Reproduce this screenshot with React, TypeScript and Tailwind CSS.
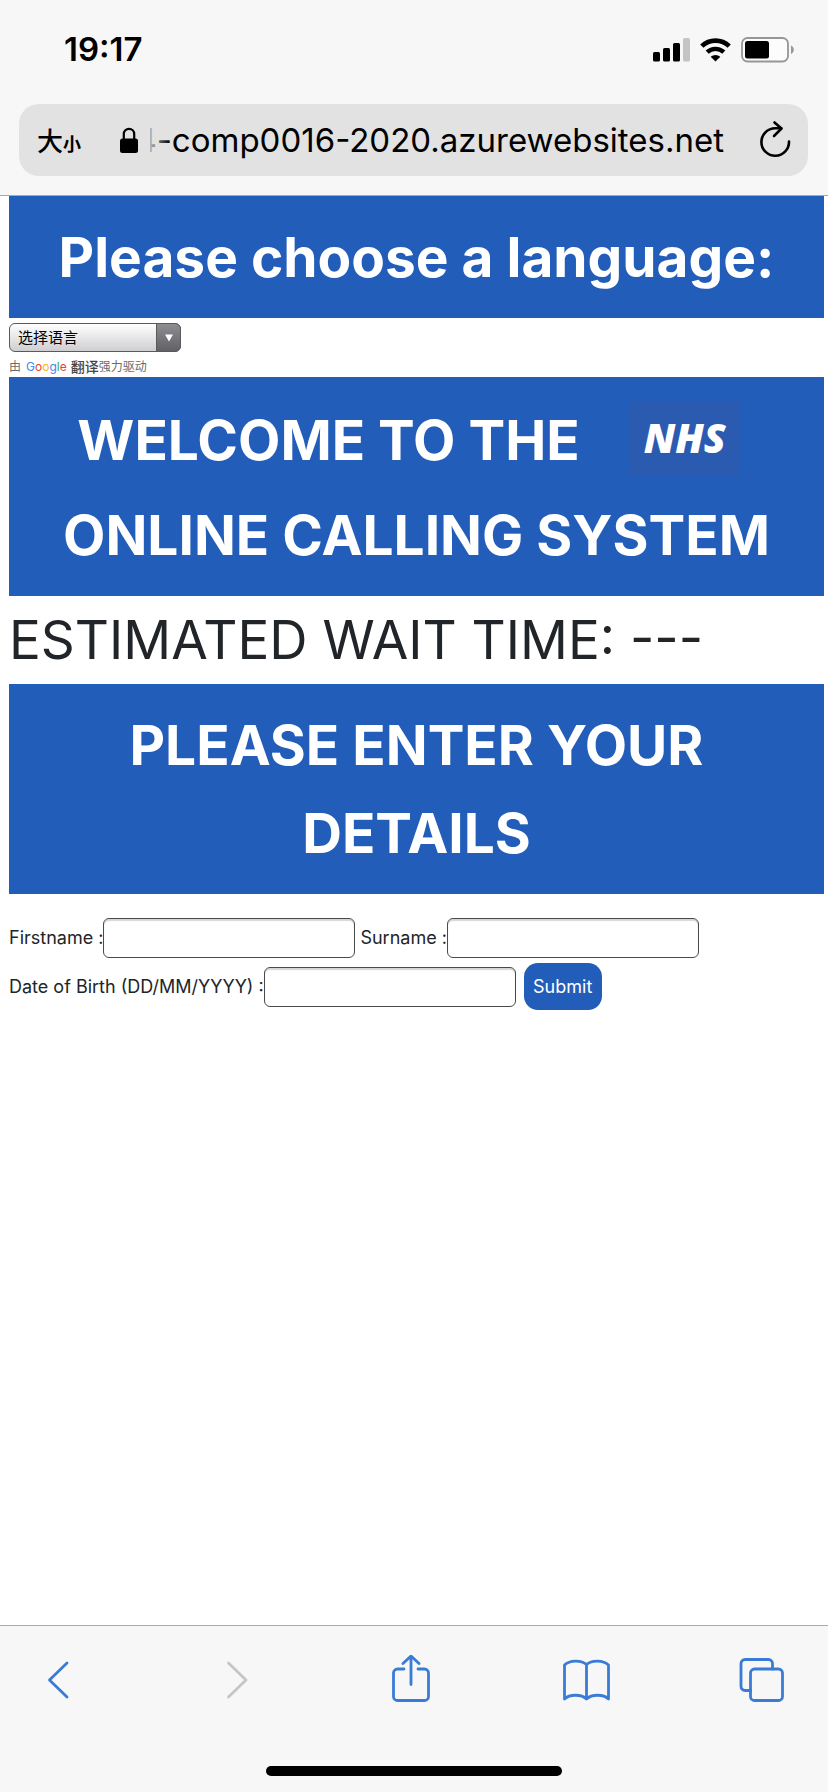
import type { ReactNode } from "react";

function StatusIcons() {
  return (
    <div className="flex items-center gap-[10px]">
      <svg width="37" height="24" viewBox="0 0 37 24" aria-label="Signal">
        <rect x="0" y="14" width="7" height="9.500" rx="1.500" />
        <rect x="10" y="10" width="7" height="13.500" rx="1.500" />
        <rect x="20" y="5" width="7" height="18.500" rx="1.500" />
        <rect x="30" y="0" width="7" height="23.500" rx="1.500" fill="#c4c4c4" />
      </svg>
      <svg width="31" height="24" viewBox="0 0 31 24" aria-label="Wi-Fi">
        <path d="M1.800 8.200a19.500 19.500 0 0 1 27.400 0" fill="none" stroke="#000" strokeWidth="4.600" />
        <path d="M7.200 14.200a12 12 0 0 1 16.600 0" fill="none" stroke="#000" strokeWidth="4.400" />
        <path d="M15.500 23.500l-4.800-4.700a7 7 0 0 1 9.600 0z" />
      </svg>
      <svg width="53" height="26" viewBox="0 0 53 26" aria-label="Battery">
        <rect x="1" y="1" width="46" height="23.500" rx="5.500" fill="#fcfcfc" stroke="#969696" strokeWidth="1.800" />
        <rect x="4" y="4" width="24" height="17.500" rx="2.500" />
        <path d="M50 8.500c1.700.7 2.800 2.300 2.800 4.200s-1.100 3.500-2.800 4.200z" fill="#969696" />
      </svg>
    </div>
  );
}

function AddressBar() {
  return (
    <div className="mr-[20px] ml-[19px] flex h-[72px] items-center rounded-[20px] bg-[#e2e2e2] pr-[14px] pl-[18px]">
      <button type="button" aria-label="大小" className="flex items-baseline leading-none font-['Noto_Sans_CJK_SC',sans-serif]">
        <span className="text-[26px] font-medium">大</span>
        <span className="text-[18px] font-bold">小</span>
      </button>
      <svg className="ml-[39px] shrink-0" width="18" height="26" viewBox="0 0 18 26" aria-label="Secure">
        <path d="M3.800 13V7a5.200 5.200 0 0 1 10.400 0v6" fill="none" stroke="#000" strokeWidth="2.200" />
        <rect x="0" y="11.500" width="18" height="14.500" rx="2.500" />
      </svg>
      <div className="relative ml-[12px] flex min-w-0 flex-1 justify-end overflow-hidden">
        <span className="text-[33px] leading-[44px] whitespace-nowrap">4-comp0016-2020.azurewebsites.net</span>
        <span className="absolute inset-y-0 left-0 w-[20px] bg-linear-to-r from-[#e2e2e2]/80 to-[#e2e2e2]/0" />
      </div>
      <button type="button" aria-label="Reload" className="ml-[32px] shrink-0">
        <svg width="38" height="40" viewBox="0 0 38 40" fill="none" stroke="#000" strokeWidth="2.600" strokeLinecap="round" strokeLinejoin="round">
          <path d="M33 21.500a13.800 13.800 0 1 1-13.800-13.300h6" />
          <path d="M18.500 2.500l7 6-7.500 7.500" />
        </svg>
      </button>
    </div>
  );
}

function Banner({ children }: { children: ReactNode }) {
  return (
    <h1 className="bg-[#225db9] px-[40px] py-[17px] text-center text-[55px] leading-[88px] font-bold text-white">
      {children}
    </h1>
  );
}

function Field({ id, label }: { id: string; label: string }) {
  return (
    <div className="flex items-center">
      <label htmlFor={id}>{label}</label>
      <input
        id={id}
        type="text"
        className="h-[40px] w-[252px] rounded-[6px] border border-[#4a4a4a] bg-white px-2 shadow-[inset_0_2px_1px_#d6d6d6]"
      />
    </div>
  );
}

function ToolButton({ label, disabled, children }: { label: string; disabled?: boolean; children: ReactNode }) {
  return (
    <button type="button" aria-label={label} disabled={disabled} className="text-[#3a7bd5] disabled:text-[#c6c6c6]">
      <svg width="48" height="50" viewBox="0 0 48 50" fill="none" stroke="currentColor" strokeWidth="2.800" strokeLinecap="round" strokeLinejoin="round">
        {children}
      </svg>
    </button>
  );
}

export default function App() {
  return (
    <div className="flex min-h-screen flex-col bg-white text-black font-['Inter','Noto_Sans_CJK_SC',sans-serif]">
      <header className="border-b border-[#a8a8a8] bg-[#f7f7f7] pb-[19px]">
        <div className="flex h-[104px] items-center justify-between pr-[34px] pb-[5px] pl-[64px]">
          <span className="text-[33px] leading-none font-semibold">19:17</span>
          <StatusIcons />
        </div>
        <AddressBar />
      </header>

      <main className="flex-1 pr-[4px] pl-[9px]">
        <Banner>Please choose a language:</Banner>

        <div className="relative mt-[5px] w-[172px]">
          <select
            aria-label="选择语言"
            className="block h-[29px] w-full appearance-none rounded-[6px] border border-[#5a5a5c] bg-linear-to-b from-white to-[#cfcfd2] px-[8px] text-[15px] leading-none"
          >
            <option>选择语言</option>
          </select>
          <span className="pointer-events-none absolute inset-y-0 right-0 flex w-[25px] items-center justify-center rounded-r-[6px] border border-[#5a5a5c] bg-linear-to-b from-[#8e8e92] to-[#626266]">
            <svg width="8" height="8" viewBox="0 0 8 8" fill="#fff">
              <path d="M0 0.500h8L4 7.500z" />
            </svg>
          </span>
        </div>
        <p className="flex h-[25px] items-center pt-[4px] text-[12px] leading-none text-[#6b6b6b]">
          由
          <a href="#translate" className="ml-[5px] flex items-center">
            <span className="text-[12px]">
              <span className="text-[#4285f4]">G</span>
              <span className="text-[#ea4335]">o</span>
              <span className="text-[#fbbc05]">o</span>
              <span className="text-[#4285f4]">g</span>
              <span className="text-[#34a853]">l</span>
              <span className="text-[#ea4335]">e</span>
            </span>
            <span className="ml-[4px] text-[14px] font-medium text-[#444]">翻译</span>
          </a>
          强力驱动
        </p>

        <Banner>
          <span className="flex h-[97px] items-center justify-center pb-[6px] whitespace-nowrap">
            WELCOME TO THE
            <span className="mr-[16px] mb-[4px] ml-[50px] flex h-[74px] w-[110px] items-center justify-center bg-[#2b5bb0] text-[40px] leading-none font-extrabold italic font-['Open_Sans',sans-serif]">
              NHS
            </span>
          </span>
          <span className="block whitespace-nowrap">ONLINE CALLING SYSTEM</span>
        </Banner>

        <h2 className="text-[53px] leading-[88px] text-[#212529]">ESTIMATED WAIT TIME: ---</h2>

        <Banner>PLEASE ENTER YOUR DETAILS</Banner>

        <form className="mt-[24px] flex flex-wrap items-center gap-x-[5px] gap-y-[5px] text-[18px] leading-none text-[#212529]">
          <Field id="firstname" label="Firstname :" />
          <Field id="surname" label="Surname :" />
          <Field id="dob" label="Date of Birth (DD/MM/YYYY) :" />
          <button type="button" className="ml-[3px] h-[47px] w-[78px] rounded-[14px] bg-[#225db9] text-white">
            Submit
          </button>
        </form>
      </main>

      <footer className="border-t border-[#a8acac] bg-[#f7f7f7] pt-[29px] pb-[16px]">
        <nav className="flex justify-between pr-[42px] pl-[34px]">
          <ToolButton label="Back">
            <path d="M33 8L15.500 25 33 42" />
          </ToolButton>
          <ToolButton label="Forward" disabled>
            <path d="M18.500 8l17.500 17L18.500 42" />
          </ToolButton>
          <ToolButton label="Share">
            <path d="M18 14h-6.500a4 4 0 0 0-4 4v23.500a4 4 0 0 0 4 4h27a4 4 0 0 0 4-4V18a4 4 0 0 0-4-4H32" />
            <path d="M25 29.500V1.500M17 8.500l8-7.500 8 7.500" />
          </ToolButton>
          <ToolButton label="Bookmarks">
            <path d="M24.500 9.500C19.500 4.800 7.500 4.800 2.500 10v34c5-5 17-5 22 0 5-5 17-5 22 0V10C41.500 4.800 29.500 4.800 24.500 9.500zV44" />
          </ToolButton>
          <ToolButton label="Tabs">
            <rect x="12.500" y="14" width="32" height="31.500" rx="4" />
            <path d="M12.500 35.500H7a4 4 0 0 1-4-4V8.500a4 4 0 0 1 4-4h23.500a4 4 0 0 1 4 4V14" />
          </ToolButton>
        </nav>
        <div className="mx-auto mt-[61px] h-[10px] w-[296px] rounded-full bg-black" />
      </footer>
    </div>
  );
}
